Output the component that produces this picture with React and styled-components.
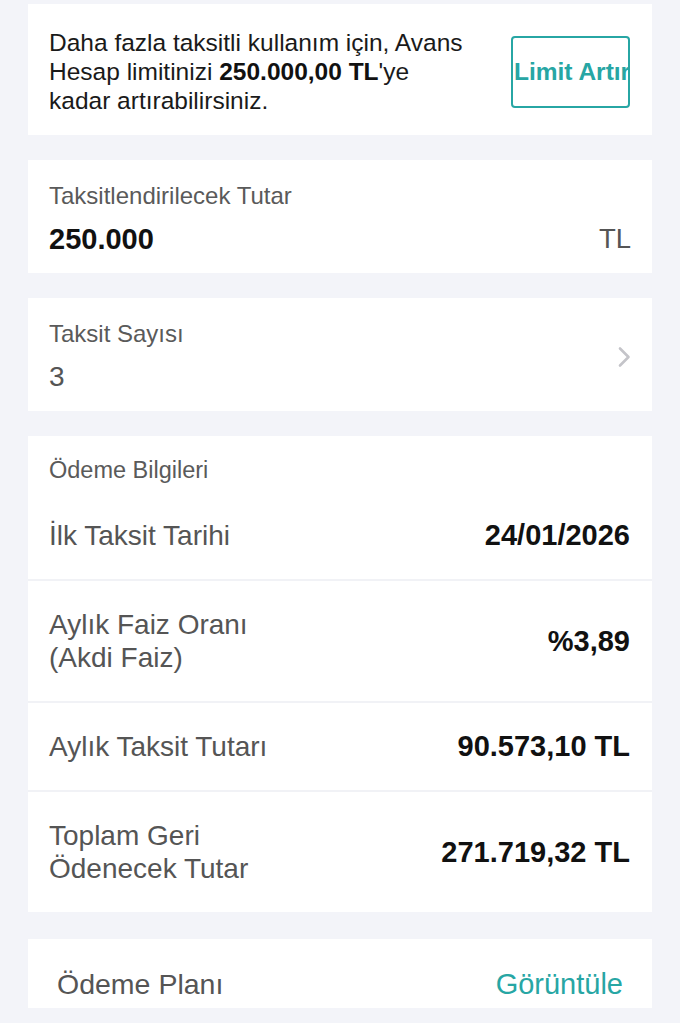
import React from "react";
import styled, { createGlobalStyle } from "styled-components";

const teal = "#27a6a4";

const GlobalStyle = createGlobalStyle`
  html, body {
    margin: 0;
    padding: 0;
    background: #f3f4f9;
  }
  body {
    font-family: "Liberation Sans", Arial, sans-serif;
    -webkit-font-smoothing: antialiased;
  }
`;

const Page = styled.div`
  display: flex;
  flex-direction: column;
  gap: 25px;
  padding: 4px 28px 17px;
  background: #f3f4f9;
  min-height: 1023px;
  box-sizing: border-box;
`;

const Card = styled.div`
  background: #ffffff;
  padding: ${({ pad }) => pad || "22px 21px 17px"};
`;

const LimitCard = styled(Card)`
  display: flex;
  align-items: center;
  justify-content: space-between;
`;

const InfoText = styled.p`
  flex: 0 0 425px;
  margin: 0;
  font-size: 24.5px;
  line-height: 29px;
  color: #1a1a1a;
  strong {
    font-weight: 700;
    color: #111;
  }
`;

const OutlineButton = styled.button`
  flex: 0 0 119px;
  height: 72px;
  box-sizing: border-box;
  border: 2px solid ${teal};
  border-radius: 4px;
  background: #fff;
  color: ${teal};
  font-family: "Liberation Sans", Arial, sans-serif;
  font-weight: 700;
  font-size: 24.5px;
  padding: 0 0 0 1px;
  text-align: left;
  white-space: nowrap;
  overflow: hidden;
`;

const FieldRow = styled.div`
  display: flex;
  align-items: center;
  justify-content: space-between;
`;

const FieldBody = styled.div`
  display: flex;
  flex-direction: column;
`;

const FieldLabel = styled.div`
  font-size: 24px;
  line-height: 28px;
  color: #5a5a5a;
`;

const FieldValue = styled.div`
  margin-top: 12px;
  font-size: ${({ strong }) => (strong ? "29px" : "28px")};
  line-height: 34px;
  font-weight: ${({ strong }) => (strong ? 700 : 400)};
  color: ${({ strong }) => (strong ? "#111" : "#555")};
`;

const Unit = styled.div`
  align-self: flex-end;
  font-size: 27.5px;
  line-height: 34px;
  color: #555;
`;

const Chevron = styled.svg`
  width: 14px;
  height: 22px;
`;

const InfoCard = styled.div`
  background: #fff;
  display: flex;
  flex-direction: column;
`;

const SectionTitle = styled.div`
  padding: 21px 21px 9px;
  font-size: 23.5px;
  line-height: 26px;
  color: #5a5a5a;
`;

const InfoRow = styled.div`
  display: flex;
  align-items: center;
  justify-content: space-between;
  padding: 27px 22px 27px 21px;
  border-top: ${({ first }) => (first ? "none" : "2px solid #f1f2f6")};
`;

const RowLabel = styled.div`
  font-size: 28px;
  line-height: 33px;
  color: #555;
`;

const RowValue = styled.div`
  font-size: 29px;
  line-height: 33px;
  font-weight: 700;
  color: #111;
  white-space: nowrap;
`;

const PlanCard = styled.div`
  background: #fff;
  display: flex;
  justify-content: space-between;
  align-items: center;
  padding: 28px 29px 7px;
  margin-top: 2px;
`;

const PlanLabel = styled.div`
  font-size: 28.5px;
  line-height: 34px;
  color: #555;
`;

const PlanLink = styled.a`
  font-size: 29px;
  line-height: 34px;
  color: ${teal};
  text-decoration: none;
`;

const rows = [
  { label: ["İlk Taksit Tarihi"], value: "24/01/2026" },
  { label: ["Aylık Faiz Oranı", "(Akdi Faiz)"], value: "%3,89" },
  { label: ["Aylık Taksit Tutarı"], value: "90.573,10 TL" },
  { label: ["Toplam Geri", "Ödenecek Tutar"], value: "271.719,32 TL" },
];

export default function App() {
  return (
    <>
      <GlobalStyle />
      <Page>
        <LimitCard pad="24px 22px 20px 21px">
          <InfoText>
            Daha fazla taksitli kullanım için, Avans Hesap limitinizi{" "}
            <strong>250.000,00 TL</strong>'ye kadar artırabilirsiniz.
          </InfoText>
          <OutlineButton>Limit Artır</OutlineButton>
        </LimitCard>

        <Card>
          <FieldRow>
            <FieldBody>
              <FieldLabel>Taksitlendirilecek Tutar</FieldLabel>
              <FieldValue strong>250.000</FieldValue>
            </FieldBody>
            <Unit>TL</Unit>
          </FieldRow>
        </Card>

        <Card>
          <FieldRow>
            <FieldBody>
              <FieldLabel>Taksit Sayısı</FieldLabel>
              <FieldValue>3</FieldValue>
            </FieldBody>
            <Chevron viewBox="0 0 14 22">
              <path
                d="M3 2.5l8.5 8.5-8.5 8.5"
                fill="none"
                stroke="#c4c4c9"
                strokeWidth="2.6"
                strokeLinecap="round"
                strokeLinejoin="round"
              />
            </Chevron>
          </FieldRow>
        </Card>

        <InfoCard>
          <SectionTitle>Ödeme Bilgileri</SectionTitle>
          {rows.map((row, idx) => (
            <InfoRow key={`row-${idx}`} first={idx === 0}>
              <RowLabel>
                {row.label.map((line) => (
                  <div key={line}>{line}</div>
                ))}
              </RowLabel>
              <RowValue>{row.value}</RowValue>
            </InfoRow>
          ))}
        </InfoCard>

        <PlanCard>
          <PlanLabel>Ödeme Planı</PlanLabel>
          <PlanLink href="#">Görüntüle</PlanLink>
        </PlanCard>
      </Page>
    </>
  );
}
